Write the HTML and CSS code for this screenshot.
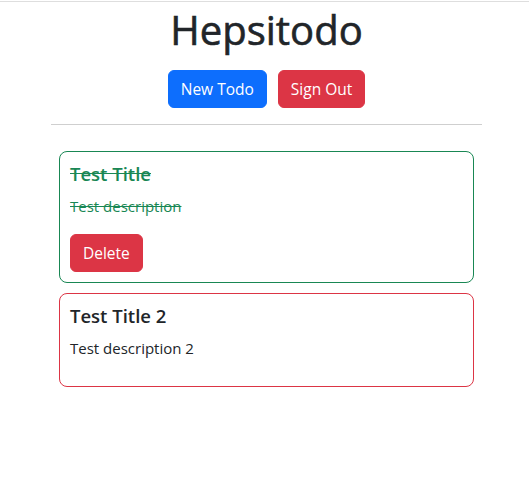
FILE: index.html
```html
<!DOCTYPE html>
<html>
<head>
<meta charset="utf-8">
<link rel="stylesheet" href="styles.css">
</head>
<body>
<div class="topline"></div>
<main class="app">
  <h1 class="title">Hepsitodo</h1>
  <div class="actions">
    <button class="btn btn-primary">New Todo</button>
    <button class="btn btn-danger">Sign Out</button>
  </div>
  <hr class="divider">
  <div class="list">
    <div class="card card-done">
      <h5 class="card-title">Test Title</h5>
      <p class="card-text">Test description</p>
      <div><button class="btn btn-danger">Delete</button></div>
    </div>
    <div class="card card-open">
      <h5 class="card-title">Test Title 2</h5>
      <p class="card-text">Test description 2</p>
    </div>
  </div>
</main>
</body>
</html>
```
FILE: styles.css
```css
* { box-sizing: border-box; }
body {
  margin: 0;
  font-family: "Open Sans", "Noto Sans", sans-serif;
  color: #212529;
  background: #fff;
  font-size: 15px;
  line-height: 24px;
}
.topline {
  height: 1px;
  margin-top: 1px;
  background: #dedede;
}
.app {
  width: 431px;
  margin: 0 0 0 51px;
  display: flex;
  flex-direction: column;
  align-items: center;
}
.title {
  margin: 4px 0 0;
  font-size: 40px;
  font-weight: 500;
  line-height: 48px;
  -webkit-text-stroke: 0.6px #212529;
}
.actions {
  display: flex;
  gap: 11px;
  margin-top: 16px;
}
.btn {
  font-family: inherit;
  font-size: 15.5px;
  line-height: 24px;
  padding: 6px 12px;
  border: 1px solid transparent;
  border-radius: 6px;
  color: #fff;
  cursor: pointer;
}
.btn-primary { background: #0d6efd; border-color: #0d6efd; }
.btn-danger { background: #dc3545; border-color: #dc3545; }
.divider {
  width: 100%;
  margin: 16px 0 0;
  border: 0;
  border-top: 1px solid #cfcfcf;
}
.list {
  width: 415px;
  margin-top: 26px;
  display: flex;
  flex-direction: column;
  gap: 10px;
}
.card {
  border: 1px solid;
  border-radius: 8px;
  padding: 10px 10px 10px;
}
.card-done { border-color: #198754; color: #198754; }
.card-done .card-title, .card-done .card-text { text-decoration: line-through; }
.card-open { border-color: #dc3545; }
.card-title {
  margin: 0 0 8px;
  font-size: 18.5px;
  font-weight: 600;
  line-height: 24px;
}
.card-text {
  margin: 0 0 16px;
}
```
